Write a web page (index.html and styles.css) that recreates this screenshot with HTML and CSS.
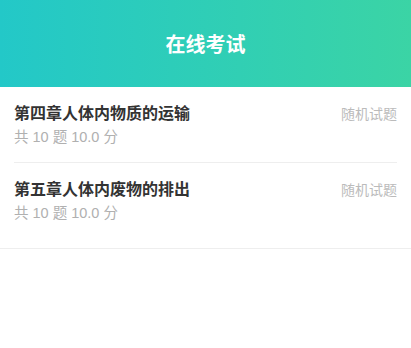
FILE: index.html
```html
<!DOCTYPE html>
<html lang="zh-CN">
<head>
  <meta charset="UTF-8">
  <meta name="viewport" content="width=device-width, initial-scale=1.0">
  <title>在线考试</title>
  <link rel="stylesheet" href="styles.css">
</head>
<body>
  <div class="header"><h1>在线考试</h1></div>
  <ul class="list">
    <li class="item">
      <div class="info">
        <h2>第四章人体内物质的运输</h2>
        <p>共 10 题 10.0 分</p>
      </div>
      <span class="tag">随机试题</span>
    </li>
    <li class="item">
      <div class="info">
        <h2>第五章人体内废物的排出</h2>
        <p>共 10 题 10.0 分</p>
      </div>
      <span class="tag">随机试题</span>
    </li>
  </ul>
</body>
</html>
```

FILE: styles.css
```css
*{margin:0;padding:0;box-sizing:border-box;}
body{background:#fff;font-family:"Liberation Sans","Noto Sans CJK SC",sans-serif;}
.header{height:87px;display:flex;justify-content:center;align-items:center;background:linear-gradient(to right,#23c8c8,#3bd4a5);}
.header h1{font-size:20px;font-weight:bold;color:#fff;}
.list{list-style:none;padding-bottom:10px;border-bottom:1px solid #eee;}
.item{margin:0 14px;padding:16px 0 15px;display:flex;justify-content:space-between;align-items:flex-start;}
.item+.item{border-top:1px solid #eee;}
.info h2{font-size:16px;font-weight:bold;color:#333;line-height:22px;}
.info p{margin-top:2px;font-size:14.5px;color:#b0b0b0;line-height:20px;}
.tag{font-size:14px;color:#bbb;line-height:22px;}
```
